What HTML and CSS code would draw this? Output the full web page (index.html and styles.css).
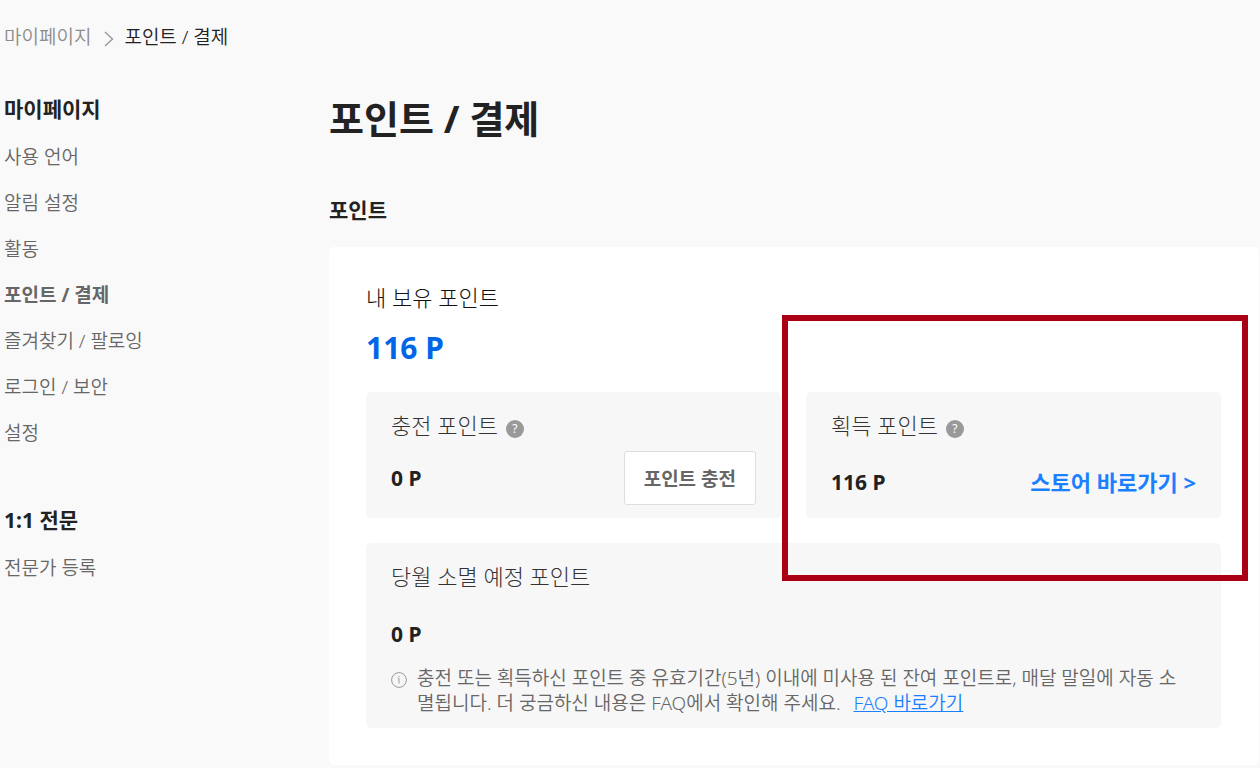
FILE: index.html
```html
<!DOCTYPE html>
<html lang="ko">
<head>
<meta charset="utf-8">
<meta name="viewport" content="width=device-width, initial-scale=1">
<title>포인트 / 결제</title>
<link rel="stylesheet" href="styles.css">
</head>
<body>
<nav class="breadcrumb" aria-label="현재 위치">
  <a class="crumb" href="#mypage">마이페이지</a>
  <svg class="crumb-arrow" viewBox="0 0 10 16" aria-hidden="true"><path d="M1 1l7.500 7L1 15" fill="none" stroke="#999" stroke-width="1.400"/></svg>
  <span class="crumb-current">포인트 / 결제</span>
</nav>
<div class="layout">
  <aside class="sidebar">
    <nav class="menu">
      <h2 class="menu-title">마이페이지</h2>
      <a class="menu-item" href="#language">사용 언어</a>
      <a class="menu-item" href="#alarm">알림 설정</a>
      <a class="menu-item" href="#activity">활동</a>
      <a class="menu-item menu-item-active" href="#point">포인트 / 결제</a>
      <a class="menu-item" href="#favorite">즐겨찾기 / 팔로잉</a>
      <a class="menu-item" href="#security">로그인 / 보안</a>
      <a class="menu-item" href="#settings">설정</a>
    </nav>
    <nav class="menu">
      <h2 class="menu-title">1:1 전문</h2>
      <a class="menu-item" href="#expert">전문가 등록</a>
    </nav>
  </aside>
  <main class="content">
    <h1 class="page-title">포인트 / 결제</h1>
    <h2 class="section-title">포인트</h2>
    <section class="card">
      <p class="label label-main">내 보유 포인트</p>
      <p class="total">116 P</p>
      <div class="boxes">
        <div class="box">
          <div class="label-row">
            <span class="label">충전 포인트</span>
            <button class="help" type="button" aria-label="충전 포인트 도움말">?</button>
          </div>
          <div class="value-row">
            <strong class="value">0 P</strong>
            <button class="charge" type="button">포인트 충전</button>
          </div>
        </div>
        <div class="box">
          <div class="highlight"></div>
          <div class="label-row">
            <span class="label">획득 포인트</span>
            <button class="help" type="button" aria-label="획득 포인트 도움말">?</button>
          </div>
          <div class="value-row value-row-link">
            <strong class="value">116 P</strong>
            <a class="store" href="#store">스토어 바로가기 &gt;</a>
          </div>
        </div>
        <div class="box box-wide">
          <p class="label">당월 소멸 예정 포인트</p>
          <p class="value value-expiring">0 P</p>
          <div class="notice">
            <svg class="info" viewBox="0 0 16 16" aria-hidden="true"><circle cx="8" cy="8" r="7.400" fill="none" stroke="#999" stroke-width="1"/><path d="M8 4v1.300M6.800 6.600H8v5" fill="none" stroke="#999" stroke-width="1"/></svg>
            <p class="notice-text">충전 또는 획득하신 포인트 중 유효기간(5년) 이내에 미사용 된 잔여 포인트로, 매달 말일에 자동 소멸됩니다. 더 궁금하신 내용은 FAQ에서 확인해 주세요. <a class="faq" href="#faq">FAQ 바로가기</a></p>
          </div>
        </div>
      </div>
    </section>
  </main>
</div>
</body>
</html>
```
FILE: styles.css
```css
* {
  box-sizing: border-box;
}

body {
  margin: 0;
  background: #f9f9f9;
  color: #222;
  font-family: "Noto Sans", "Noto Sans CJK KR", sans-serif;
  font-size: 19px;
  font-weight: 350;
  line-height: 26px;
}

h1, h2, p {
  margin: 0;
}

a {
  color: inherit;
  text-decoration: none;
}

button {
  font-family: inherit;
  cursor: pointer;
}

.breadcrumb {
  display: flex;
  align-items: center;
  padding: 24px 4px 0;
}

.crumb {
  color: #8c8c8c;
}

.crumb-arrow {
  width: 10px;
  height: 16px;
  margin: 4px 10px 0 13px;
}

.layout {
  display: flex;
  gap: 25px;
  padding: 42px 1px 3px 4px;
}

.sidebar {
  flex: 0 0 300px;
  display: flex;
  flex-direction: column;
  gap: 59px;
  padding-top: 2px;
}

.menu {
  display: flex;
  flex-direction: column;
  align-items: flex-start;
  gap: 20px;
}

.menu-title {
  font-size: 21px;
  font-weight: 700;
  line-height: 30px;
}

.menu-item {
  color: #666;
}

.menu-item-active {
  font-weight: 700;
}

.content {
  flex: 1;
  min-width: 0;
}

.page-title {
  font-size: 38px;
  font-weight: 700;
  line-height: 52px;
}

.section-title {
  margin: 52px 0 23px;
  font-size: 21px;
  font-weight: 700;
  line-height: 28px;
}

.card {
  padding: 36px 38px 37px 37px;
  border-radius: 5px;
  background: #fff;
}

.label {
  color: #333;
  font-size: 22px;
  font-weight: 300;
  line-height: 28px;
}

.label-main {
  color: #111;
}

.total {
  margin-top: 17px;
  color: #0066e8;
  font-size: 30px;
  font-weight: 700;
  line-height: 40px;
}

.boxes {
  display: grid;
  grid-template-columns: 1fr 1fr;
  gap: 25px;
  margin-top: 24px;
}

.box {
  position: relative;
  min-height: 126px;
  padding: 19px 25px 12px;
  border-radius: 5px;
  background: #f7f7f7;
}

.box-wide {
  grid-column: 1 / -1;
}

.label-row {
  display: flex;
  align-items: center;
  gap: 8px;
}

.help {
  width: 18px;
  height: 18px;
  margin-top: 8px;
  padding: 0;
  border: 0;
  border-radius: 50%;
  background: #999;
  color: #fff;
  font-size: 12px;
  line-height: 18px;
}

.value-row {
  display: flex;
  align-items: center;
  justify-content: space-between;
  margin-top: 12px;
}

.value-row-link {
  margin-top: 29px;
}

.value {
  font-size: 21px;
  font-weight: 700;
  line-height: 28px;
}

.charge {
  height: 54px;
  padding: 0 19px;
  border: 1px solid #ddd;
  border-radius: 3px;
  background: #fff;
  color: #666;
  font-size: 19px;
  font-weight: 700;
}

.store {
  color: #1a80ff;
  font-size: 22px;
  font-weight: 700;
  line-height: 28px;
}

.value-expiring {
  margin-top: 30px;
}

.notice {
  display: flex;
  gap: 10px;
  margin-top: 18px;
  padding-right: 8px;
}

.info {
  flex: 0 0 16px;
  height: 16px;
  margin-top: 6px;
}

.notice-text {
  color: #666;
  line-height: 25px;
}

.faq {
  margin-left: 8px;
  color: #1a80ff;
  text-decoration: underline;
}

.highlight {
  position: absolute;
  inset: -77px -27px -63px -24px;
  border: 6px solid #a90016;
  z-index: 1;
  pointer-events: none;
}
```
